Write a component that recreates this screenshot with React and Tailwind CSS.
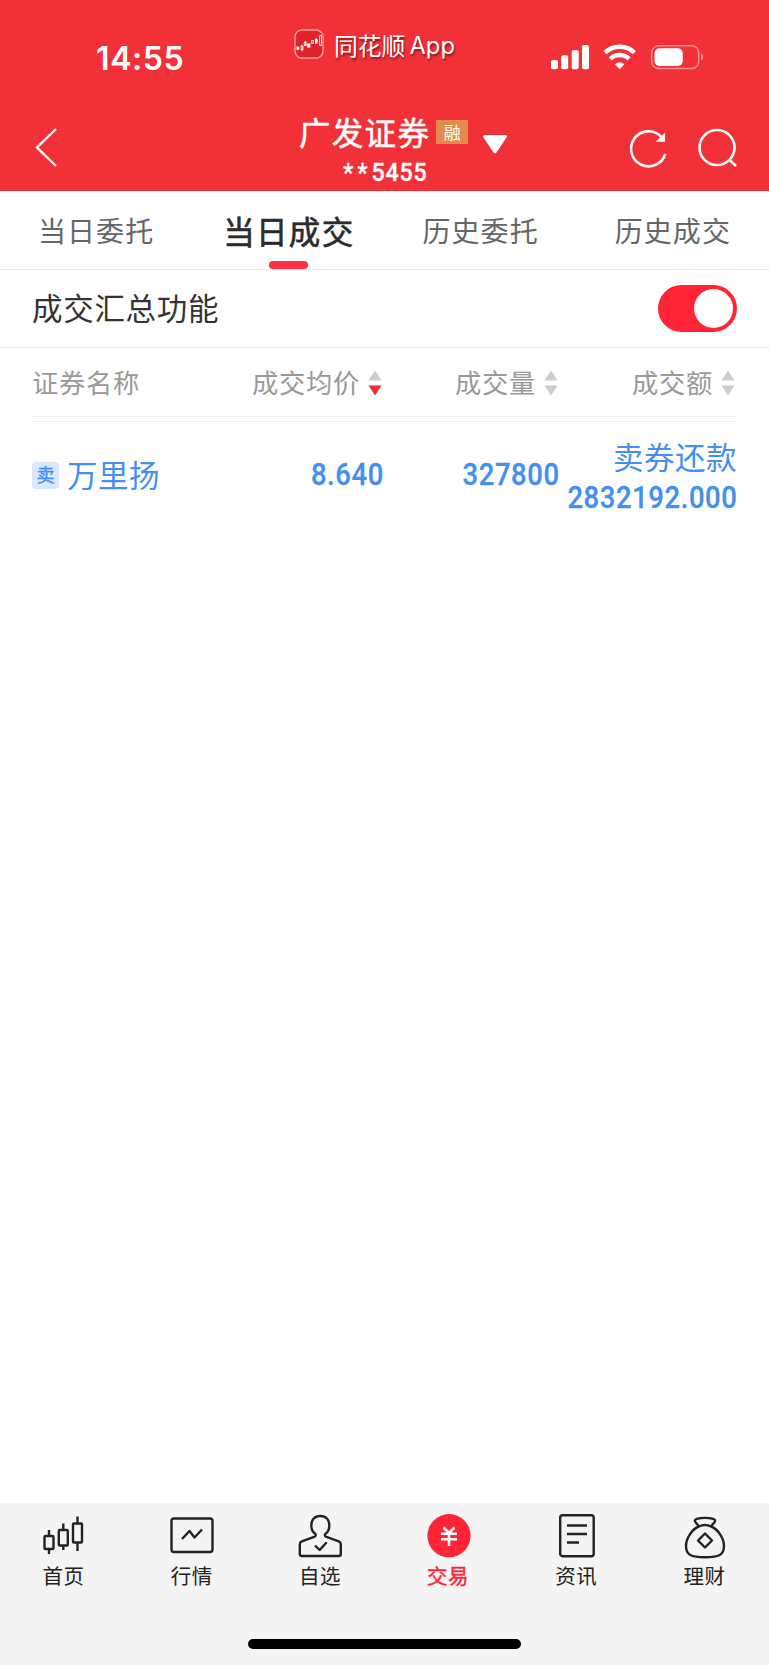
const tabs = ['当日委托', '当日成交', '历史委托', '历史成交'];

function StatusBar() {
  return (
    <div className="flex h-[104px] items-start text-white">
      <div className="ml-[96px] mt-[39px] w-[198px] font-['Inter'] text-[32px] font-semibold leading-[40px] tracking-[0.6px]">14:55</div>
      <svg className="mt-[29px] shrink-0" width="30" height="30" viewBox="0 0 30 30" fill="none">
        <rect x="1" y="1" width="28" height="28" rx="7" fill="#df232b" stroke="#f9a0a3" strokeWidth="1.4" />
        <path d="M2.5 17.5h2.6v3.3H2.5zM13.2 14.5h3.2v4h-3.2zM21 10h2.6v4.500H21z" fill="#fff" />
        <path d="M7 17h2v3.8H7zM8 15.5v6.5M10.3 13h2v3.5h-2zM11.3 12v5M17.6 11.5h1.8v3h-1.8zM25.5 6.500h1.8v10h-1.8zM22.3 9v6" stroke="#fff" strokeWidth=".8" />
      </svg>
      <div className="ml-[10px] mt-[29px] flex w-[216px] items-center gap-[4px] text-[23.8px] leading-[30px] [text-shadow:1px_2px_2px_rgba(80,0,0,0.6)]">
        <span>同花顺</span>
        <span className="pt-[2px] font-['Inter']">App</span>
      </div>
      <svg className="mt-[44px] shrink-0" width="156" height="27" viewBox="0 0 156 27" fill="#fff">
        <rect x="1" y="16" width="7" height="9.3" rx="2" />
        <rect x="11.2" y="11.3" width="7" height="14" rx="2" />
        <rect x="21.7" y="6" width="7" height="19.3" rx="2" />
        <rect x="32" y="1" width="7" height="24.3" rx="2" />
        <g fill="none" stroke="#fff">
          <path d="M55 8.6a21.5 21.5 0 0 1 29.4 0" strokeWidth="4.6" />
          <path d="M60.3 14.8a13.6 13.6 0 0 1 18.8 0" strokeWidth="4.4" />
        </g>
        <path d="M65 20.2q4.7-4 9.4 0l-4.7 5z" />
        <rect x="101.7" y="1.7" width="47" height="22.8" rx="7" fill="none" stroke="#fff" strokeOpacity=".45" strokeWidth="1.5" />
        <rect x="104.5" y="4.3" width="28.3" height="17.7" rx="5" />
        <path d="M151 9.5c3 1 3 6 0 7z" fillOpacity=".5" />
      </svg>
    </div>
  );
}

function TitleBar() {
  return (
    <div className="flex h-[87px] text-white">
      <svg className="ml-[34px] mt-[22px] shrink-0" width="26" height="44" viewBox="0 0 26 44" fill="none" stroke="#fff" strokeWidth="2.4">
        <path d="M22 3 3 21.5 22 40" />
      </svg>
      <div className="ml-[239px] flex w-[212px] flex-col">
        <div className="mt-[6px] flex h-[42px] items-center">
          <span className="text-[31.5px] leading-[42px] tracking-[1.3px] [-webkit-text-stroke:0.5px_#fff]">广发证券</span>
          <span className="ml-[6px] mt-[2px] flex h-[24px] w-[32px] items-center justify-center bg-[#e38b4a] pb-[2px] text-[17px] leading-none">融</span>
          <svg className="ml-[14px] mt-[26px]" width="26" height="21" viewBox="0 0 26 21" fill="#fff">
            <path d="M3 1h20q3 0 1.5 2.5L14.5 18.5q-1.5 2-3 0L1.5 3.5Q0 1 3 1z" />
          </svg>
        </div>
        <div className="ml-[44px] mt-[3px] flex h-[34px] origin-left scale-x-[0.88] font-['Roboto'] text-[26.5px] font-medium leading-[34px] tracking-[0.8px] [-webkit-text-stroke:0.3px_#fff]">
          <span className="tracking-[4.5px]">**</span>5455
        </div>
      </div>
      <svg className="ml-[119px] mt-[22px] shrink-0" width="120" height="44" viewBox="0 0 120 44" fill="none" stroke="#fff" strokeWidth="2.6">
        <path d="M35.3 28A17.5 17.5 0 1 1 31 10.5" />
        <path d="M34.3 8.500v6.500h-6.800z" fill="#fff" strokeWidth="1.5" />
        <circle cx="87" cy="21.5" r="17.500" />
        <path d="m99.5 34 6.5 6" />
      </svg>
    </div>
  );
}

function Tabs() {
  return (
    <div className="grid h-[79px] grid-cols-4 border-b border-[#e9e9e9]">
      {tabs.map((tab, i) =>
        i === 1 ? (
          <div key={tab} className="flex flex-col items-center text-[31.5px] text-[#2b2b2b]">
            <span className="mt-[19px] h-[40px] pl-[1px] leading-[40px] tracking-[1.3px] [-webkit-text-stroke:0.6px_#2b2b2b]">{tab}</span>
            <span className="mt-[11px] h-[8px] w-[39px] shrink-0 rounded-full bg-[#ff3046]" />
          </div>
        ) : (
          <span key={tab} className="mt-[19px] text-center text-[28px] leading-[40px] tracking-[1.1px] text-[#666]">{tab}</span>
        )
      )}
    </div>
  );
}

function SummarySwitch() {
  return (
    <div className="flex h-[78px] items-center justify-between border-b border-[#e9e9e9] px-8">
      <span className="pb-[2px] text-[30.5px] tracking-[0.7px] text-[#333]">成交汇总功能</span>
      <span className="flex h-[47px] w-[79px] items-center justify-end rounded-full bg-[#ff2436] pr-1">
        <span className="size-[39px] rounded-full bg-white" />
      </span>
    </div>
  );
}

function Sort({ down = '#ccc' }) {
  return (
    <svg className="ml-[8px] mr-[2px] mt-[2px]" width="14" height="26" viewBox="0 0 14 26">
      <path d="M7 .5 13.5 10.5H.5z" fill="#ccc" />
      <path d="M7 25.5.5 15.500h13z" fill={down} />
    </svg>
  );
}

function Amount({ children }) {
  return (
    <span className="origin-right scale-x-[0.87] text-right font-['Roboto'] text-[31.5px] font-medium leading-[40px] tracking-[0.7px] [-webkit-text-stroke:0.3px_#448fef]">
      {children}
    </span>
  );
}

function Trades() {
  return (
    <div className="px-8">
      <div className="flex h-[69px] items-center border-b border-[#f2f2f2] pb-[1px] text-[26.3px] tracking-[0.7px] text-[#999]">
        <span className="w-[160px]">证券名称</span>
        <span className="flex w-[192px] items-center justify-end">成交均价<Sort down="#ee2f2f" /></span>
        <span className="flex w-[176px] items-center justify-end">成交量<Sort /></span>
        <span className="flex grow items-center justify-end">成交额<Sort /></span>
      </div>
      <div className="mt-1 flex h-[108px] items-center border-t border-[#f2f2f2] text-[#448fef]">
        <span className="flex w-[160px] items-center">
          <span className="flex size-[27px] items-center justify-center rounded bg-[#dae8fd] pb-[3px] text-[18px] leading-none [-webkit-text-stroke:0.3px_#448fef]">卖</span>
          <span className="ml-[8px] pb-[2px] text-[30.5px] tracking-[0.5px]">万里扬</span>
        </span>
        <span className="flex w-[192px] justify-end pb-[2px]"><Amount>8.640</Amount></span>
        <span className="flex w-[176px] justify-end pb-[2px]"><Amount>327800</Amount></span>
        <span className="flex w-[177px] flex-col items-end pt-[2px]">
          <span className="mb-[2px] text-[30.5px] leading-[40px] tracking-[0.5px]">卖券还款</span>
          <Amount>2832192.000</Amount>
        </span>
      </div>
    </div>
  );
}

const navItems = [
  {
    label: '首页',
    icon: (
      <>
        <rect x="2.5" y="22" width="9" height="13" rx="1" />
        <rect x="16.8" y="16" width="9" height="15.5" rx="1" />
        <rect x="31" y="9.5" width="9" height="19" rx="1" />
        <path d="M7 16v6M7 35v5M21.3 9.5v6.5M21.3 31.5v4.5M35.5 2.5v7M35.5 28.5v8.5" />
      </>
    ),
  },
  {
    label: '行情',
    icon: (
      <>
        <rect x="1.5" y="4.5" width="41" height="33.5" rx="2.5" />
        <path d="m12 25 7.5-8 5 6.5L32 15.5" />
      </>
    ),
  },
  {
    label: '自选',
    icon: (
      <>
        <path d="M17.3 20C14.500 18 13.3 15 13.3 11.5 13.3 5.5 16.8 2 22.3 2s9 3.5 9 9.5c0 3.500-1 6.500-4 8.500-.7.7-.5 2.2.5 2.6l13 4.7q2 .8 2 3v9.7q0 2-2 2h-37q-2 0-2-2v-9.7q0-2.2 2-3l13-4.7c1-.4 1.200-1.900.5-2.600z" />
        <path d="m17 31.5 4.7 4.5 7-7.8" />
      </>
    ),
  },
  {
    label: '交易',
    active: true,
    icon: (
      <>
        <circle cx="22" cy="21.7" r="21.6" fill="#ff2436" stroke="none" />
        <path d="m16.5 13.5 5.5 5.5 5.5-5.5M14 19.8h16M14 25.2h16M22 19.5V32" stroke="#fff" strokeWidth="2.5" />
      </>
    ),
  },
  {
    label: '资讯',
    icon: (
      <>
        <rect x="5.2" y="1.2" width="33.5" height="41" rx="2.5" />
        <path d="M12 11.5h20M12 20h20M12 28.5h12" />
      </>
    ),
  },
  {
    label: '理财',
    icon: (
      <>
        <path d="M16 12.5C9 15 3 24.5 3 32c0 9 5 11.2 19 11.2S41 41 41 32c0-7.5-6-17-13-19.5q-6-3-12 0z" />
        <path d="M15.5 12.5c-.5-3-3.7-3.5-3.7-6C11.8 3 32.2 3 32.2 6.500c0 2.500-3.2 3-3.7 6" />
        <path d="m22 19.500 7 7-7 7-7-7z" />
      </>
    ),
  },
];

function BottomNav() {
  return (
    <div className="flex h-[162px] flex-col items-center bg-[#f4f4f4]">
      <div className="grid w-full grid-cols-6 pt-[11px]">
        {navItems.map((item) => (
          <div key={item.label} className="flex flex-col items-center">
            <svg width="44" height="46" viewBox="0 0 44 46" fill="none" stroke="#222" strokeWidth="2.4" strokeLinejoin="round">
              {item.icon}
            </svg>
            <span className={`mt-[1px] pr-[1px] text-[20.5px] leading-[28px] tracking-[0.5px] ${item.active ? 'text-[#ff2436] [-webkit-text-stroke:0.4px_#ff2436]' : 'text-[#222]'}`}>
              {item.label}
            </span>
          </div>
        ))}
      </div>
      <div className="mt-[50px] h-[10px] w-[273px] rounded-full bg-black" />
    </div>
  );
}

export default function App() {
  return (
    <div className="flex h-[1665px] w-[769px] flex-col overflow-hidden whitespace-nowrap bg-white font-['Noto_Sans_CJK_SC',sans-serif]">
      <header className="bg-[#f23038]">
        <StatusBar />
        <TitleBar />
      </header>
      <Tabs />
      <SummarySwitch />
      <main className="grow">
        <Trades />
      </main>
      <BottomNav />
    </div>
  );
}
